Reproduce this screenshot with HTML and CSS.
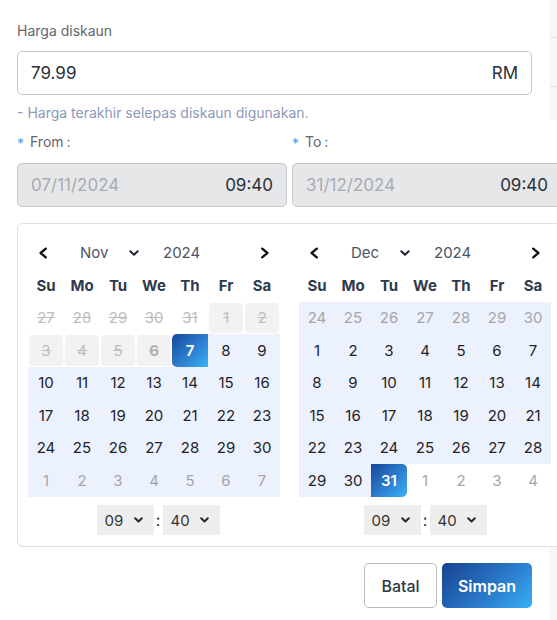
FILE: index.html
```html
<!DOCTYPE html>
<html lang="ms">
<head>
<meta charset="utf-8">
<title>Harga diskaun</title>
<link rel="stylesheet" href="styles.css">
</head>
<body>
<div class="page">
  <div class="main">
    <form class="form">
      <label class="field-label">Harga diskaun</label>
      <div class="price-input"><span class="price-value">79.99</span><span class="price-unit">RM</span></div>
      <p class="hint">- Harga terakhir selepas diskaun digunakan.</p>
      <div class="date-row">
        <div class="date-field">
          <div class="date-label"><span class="req">*</span>From<span class="colon">:</span></div>
          <div class="date-input"><span class="date-text">07/11/2024</span><span class="time-text">09:40</span></div>
        </div>
        <div class="date-field">
          <div class="date-label"><span class="req">*</span>To<span class="colon">:</span></div>
          <div class="date-input"><span class="date-text">31/12/2024</span><span class="time-text">09:40</span></div>
        </div>
      </div>

      <div class="picker">
        <div class="cal">
          <div class="cal-head">
            <span class="nav-btn"><svg width="10" height="12" viewBox="0 0 10 12"><path d="M7.8 1.6 L2.6 6 L7.8 10.4" fill="none" stroke="currentColor" stroke-width="2.3" stroke-linecap="round" stroke-linejoin="round"/></svg></span>
            <span class="month-select"><span>Nov</span><svg width="10" height="6" viewBox="0 0 10 6"><path d="M1.3 1.2 L5 4.8 L8.7 1.2" fill="none" stroke="currentColor" stroke-width="2" stroke-linecap="round" stroke-linejoin="round"/></svg></span>
            <span class="year">2024</span>
            <span class="nav-btn next"><svg width="10" height="12" viewBox="0 0 10 12"><path d="M2.2 1.6 L7.4 6 L2.2 10.4" fill="none" stroke="currentColor" stroke-width="2.3" stroke-linecap="round" stroke-linejoin="round"/></svg></span>
          </div>
          <div class="grid">
            <div class="wd">Su</div><div class="wd">Mo</div><div class="wd">Tu</div><div class="wd">We</div><div class="wd">Th</div><div class="wd">Fr</div><div class="wd">Sa</div>
            <div class="d dis">27</div><div class="d dis">28</div><div class="d dis">29</div><div class="d dis">30</div><div class="d dis">31</div><div class="d dis blk">1</div><div class="d dis blk">2</div>
            <div class="d dis blk">3</div><div class="d dis blk">4</div><div class="d dis blk">5</div><div class="d dis blk today">6</div><div class="d start">7</div><div class="d rng">8</div><div class="d rng">9</div>
            <div class="d rng">10</div><div class="d rng">11</div><div class="d rng">12</div><div class="d rng">13</div><div class="d rng">14</div><div class="d rng">15</div><div class="d rng">16</div>
            <div class="d rng">17</div><div class="d rng">18</div><div class="d rng">19</div><div class="d rng">20</div><div class="d rng">21</div><div class="d rng">22</div><div class="d rng">23</div>
            <div class="d rng">24</div><div class="d rng">25</div><div class="d rng">26</div><div class="d rng">27</div><div class="d rng">28</div><div class="d rng">29</div><div class="d rng">30</div>
            <div class="d rng oth">1</div><div class="d rng oth">2</div><div class="d rng oth">3</div><div class="d rng oth">4</div><div class="d rng oth">5</div><div class="d rng oth">6</div><div class="d rng oth">7</div>
          </div>
          <div class="time-row shift">
            <span class="tsel"><span>09</span><svg width="9" height="6" viewBox="0 0 9 6"><path d="M1.2 1.2 L4.5 4.5 L7.8 1.2" fill="none" stroke="currentColor" stroke-width="2" stroke-linecap="round" stroke-linejoin="round"/></svg></span>
            <span class="tcolon">:</span>
            <span class="tsel"><span>40</span><svg width="9" height="6" viewBox="0 0 9 6"><path d="M1.2 1.2 L4.5 4.5 L7.8 1.2" fill="none" stroke="currentColor" stroke-width="2" stroke-linecap="round" stroke-linejoin="round"/></svg></span>
          </div>
        </div>

        <div class="cal">
          <div class="cal-head">
            <span class="nav-btn"><svg width="10" height="12" viewBox="0 0 10 12"><path d="M7.8 1.6 L2.6 6 L7.8 10.4" fill="none" stroke="currentColor" stroke-width="2.3" stroke-linecap="round" stroke-linejoin="round"/></svg></span>
            <span class="month-select"><span>Dec</span><svg width="10" height="6" viewBox="0 0 10 6"><path d="M1.3 1.2 L5 4.8 L8.7 1.2" fill="none" stroke="currentColor" stroke-width="2" stroke-linecap="round" stroke-linejoin="round"/></svg></span>
            <span class="year">2024</span>
            <span class="nav-btn next"><svg width="10" height="12" viewBox="0 0 10 12"><path d="M2.2 1.6 L7.4 6 L2.2 10.4" fill="none" stroke="currentColor" stroke-width="2.3" stroke-linecap="round" stroke-linejoin="round"/></svg></span>
          </div>
          <div class="grid">
            <div class="wd">Su</div><div class="wd">Mo</div><div class="wd">Tu</div><div class="wd">We</div><div class="wd">Th</div><div class="wd">Fr</div><div class="wd">Sa</div>
            <div class="d rng oth">24</div><div class="d rng oth">25</div><div class="d rng oth">26</div><div class="d rng oth">27</div><div class="d rng oth">28</div><div class="d rng oth">29</div><div class="d rng oth">30</div>
            <div class="d rng">1</div><div class="d rng">2</div><div class="d rng">3</div><div class="d rng">4</div><div class="d rng">5</div><div class="d rng">6</div><div class="d rng">7</div>
            <div class="d rng">8</div><div class="d rng">9</div><div class="d rng">10</div><div class="d rng">11</div><div class="d rng">12</div><div class="d rng">13</div><div class="d rng">14</div>
            <div class="d rng">15</div><div class="d rng">16</div><div class="d rng">17</div><div class="d rng">18</div><div class="d rng">19</div><div class="d rng">20</div><div class="d rng">21</div>
            <div class="d rng">22</div><div class="d rng">23</div><div class="d rng">24</div><div class="d rng">25</div><div class="d rng">26</div><div class="d rng">27</div><div class="d rng">28</div>
            <div class="d rng">29</div><div class="d rng">30</div><div class="d end">31</div><div class="d oth">1</div><div class="d oth">2</div><div class="d oth">3</div><div class="d oth">4</div>
          </div>
          <div class="time-row">
            <span class="tsel"><span>09</span><svg width="9" height="6" viewBox="0 0 9 6"><path d="M1.2 1.2 L4.5 4.5 L7.8 1.2" fill="none" stroke="currentColor" stroke-width="2" stroke-linecap="round" stroke-linejoin="round"/></svg></span>
            <span class="tcolon">:</span>
            <span class="tsel"><span>40</span><svg width="9" height="6" viewBox="0 0 9 6"><path d="M1.2 1.2 L4.5 4.5 L7.8 1.2" fill="none" stroke="currentColor" stroke-width="2" stroke-linecap="round" stroke-linejoin="round"/></svg></span>
          </div>
        </div>
      </div>

      <div class="actions">
        <button type="button" class="btn btn-cancel">Batal</button>
        <button type="button" class="btn btn-save">Simpan</button>
      </div>
    </form>
  </div>
  <div class="rail">
    <div class="rail-top">
      <div class="rail-line"></div>
      <div class="rail-line second"></div>
    </div>
    <div class="rail-bottom"></div>
  </div>
</div>
</body>
</html>
```

FILE: styles.css
```css
* { box-sizing: border-box; }
html, body { margin: 0; padding: 0; overflow: hidden; background: #fff; }
body {
  font-family: Inter, "Noto Sans", "Liberation Sans", sans-serif;
  color: #222;
}
.page { display: flex; width: 557px; height: 620px; overflow: hidden; }
.main { flex: 0 0 550px; width: 550px; padding-left: 17px; }
.form { width: 545px; padding-top: 21px; display: flex; flex-direction: column; }

.field-label { font-size: 14px; line-height: 20px; color: #636670; }
.price-input {
  margin-top: 10px; width: 515px; height: 44px;
  border: 1px solid #c4c7cc; border-radius: 5px;
  display: flex; align-items: center; justify-content: space-between;
  padding: 0 13px; font-size: 17px; color: #2b2f36;
}
.hint { margin: 8px 0 0; font-size: 14px; line-height: 20px; color: #8c99b9; }

.date-row { margin-top: 9px; display: grid; grid-template-columns: 270px 270px; column-gap: 5px; }
.date-label { font-size: 14px; line-height: 20px; color: #636670; display: flex; align-items: center; }
.req { color: #4f9bf5; margin-right: 6px; transform: translateY(2px); }
.colon { margin-left: 3px; }
.date-input {
  margin-top: 11px; height: 44px;
  border: 1px solid #c4c7cc; border-radius: 5px; background: #e6e7e9;
  display: flex; align-items: center; justify-content: space-between;
  padding: 0 13px; font-size: 17px;
}
.date-text { color: #a9acb2; }
.time-text { color: #2b2f36; }

.picker {
  margin-top: 16px; width: 545px;
  border: 1px solid #dcdfe6; border-radius: 6px;
  padding: 12px 10px 11px;
  display: flex; gap: 19px; background: #fff;
}
.cal { width: 252px; flex: none; }
.cal-head { height: 33px; display: flex; align-items: center; }
.nav-btn { width: 30px; height: 33px; display: flex; align-items: center; justify-content: center; color: #111; }
.nav-btn.next { margin-left: auto; }
.month-select {
  margin-left: 12px; width: 78px; padding: 0 9px 0 10px;
  display: flex; align-items: center; justify-content: space-between;
  font-size: 15px; color: #4b5563;
}
.month-select svg { color: #1f2937; }
.year { margin-left: 15px; font-size: 15px; color: #4b5563; }

.grid { display: grid; grid-template-columns: repeat(7, 36px); grid-auto-rows: 32.5px; }
.wd { display: flex; align-items: center; justify-content: center; font-size: 15px; font-weight: 700; color: #2f3b4c; }
.d { display: flex; align-items: center; justify-content: center; font-size: 15px; color: #1f2328; }
.d.rng { background: #ebf1fd; }
.d.dis { color: #bdbdbd; text-decoration: line-through; }
.d.blk { background: #f2f2f3; background-clip: padding-box; border: 1px solid transparent; border-radius: 5px; }
.d.today { font-weight: 700; color: #b0b0b0; }
.d.oth { color: #a6a6a6; }
.d.start, .d.end {
  color: #fff; font-weight: 600;
  background: linear-gradient(135deg, #17479a 0%, #2d7fd0 55%, #3ab2f6 100%);
}
.d.start { border-radius: 5px 0 0 5px; }
.d.end { border-radius: 0 5px 5px 0; }

.time-row { margin-top: 8.5px; height: 30px; display: flex; justify-content: center; align-items: stretch; }
.time-row.shift { padding-left: 8px; }
.tsel {
  width: 57px; background: #eeeeee;
  display: flex; align-items: center; justify-content: space-between;
  padding: 0 11px 0 8px; font-size: 15px; color: #333;
}
.tsel svg { color: #1f2937; }
.tcolon { width: 9px; display: flex; align-items: center; justify-content: center; font-size: 16px; color: #333; }

.actions { width: 515px; margin-top: 16px; display: flex; justify-content: flex-end; gap: 5px; }
.btn {
  height: 45px; border-radius: 5px;
  font-family: inherit; font-size: 16px; cursor: pointer;
}
.btn-cancel { width: 73px; padding: 0; background: #fff; border: 1px solid #b8bbc1; color: #2f3a47; font-weight: 500; }
.btn-save {
  width: 90px; padding: 0;
  border: none; color: #fff; font-weight: 600;
  background: linear-gradient(135deg, #16438f 0%, #2a77c9 55%, #38b0f4 100%);
}

.rail { flex: 0 0 7px; display: flex; flex-direction: column; }
.rail-top { height: 120px; background: #f7f7f8; }
.rail-line { height: 38px; border-bottom: 1px solid #e3e4e6; }
.rail-line.second { height: 49px; }
.rail-bottom { margin-top: auto; height: 73px; background: #f7f7f8; }
```
